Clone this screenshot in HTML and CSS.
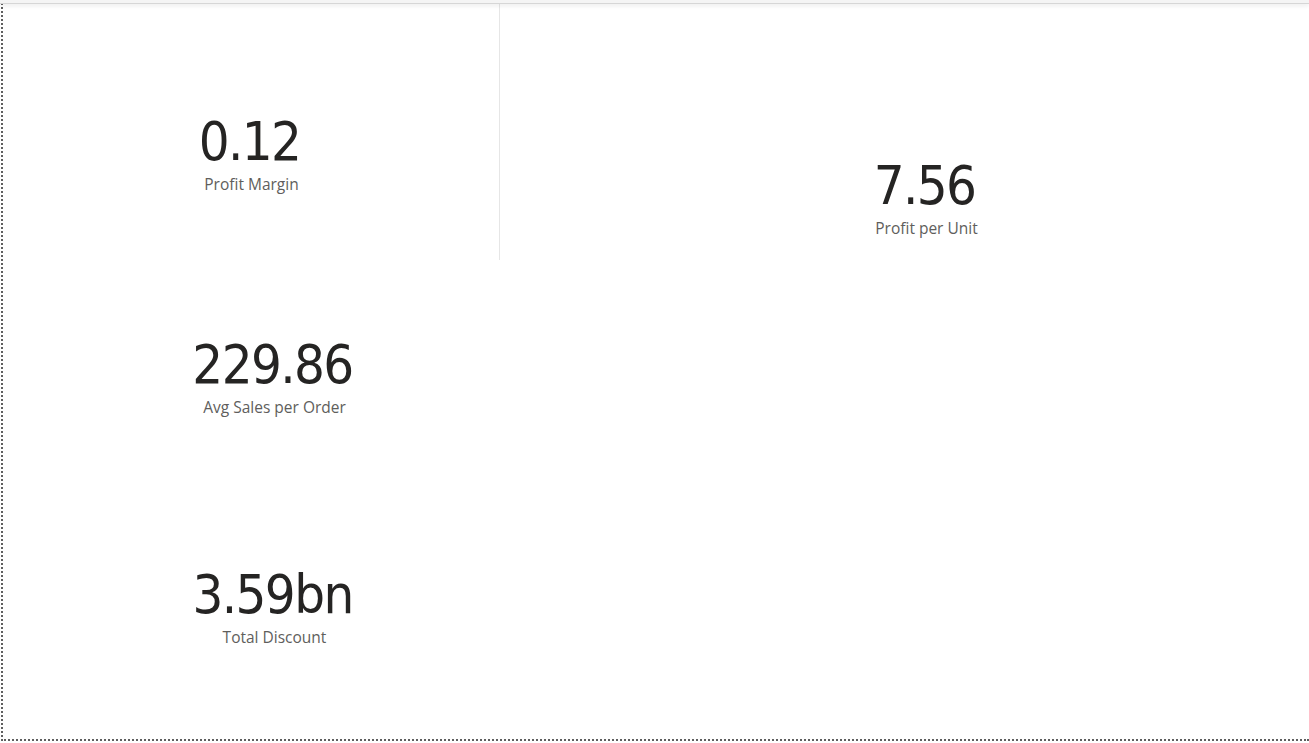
FILE: index.html
```html
<!DOCTYPE html>
<html lang="en">
<head>
<meta charset="utf-8">
<title>Report</title>
<link rel="stylesheet" href="styles.css">
</head>
<body>
<div class="topbar"></div>
<main class="canvas">
  <section class="visual card-margin">
    <div class="value">0.12</div>
    <div class="label">Profit Margin</div>
  </section>
  <section class="visual card-unit">
    <div class="value">7.56</div>
    <div class="label">Profit per Unit</div>
  </section>
  <section class="visual card-avg">
    <div class="value">229.86</div>
    <div class="label">Avg Sales per Order</div>
  </section>
  <section class="visual card-discount">
    <div class="value">3.59bn</div>
    <div class="label">Total Discount</div>
  </section>
</main>
</body>
</html>
```
FILE: styles.css
```css
html, body {
  margin: 0;
  padding: 0;
  width: 1309px;
  height: 743px;
  overflow: hidden;
  background: #ffffff;
}

.topbar {
  position: absolute;
  left: 0;
  top: 0;
  width: 1309px;
  height: 3px;
  background: #f4f4f4;
  border-bottom: 1px solid #d6d6d6;
  box-shadow: 0 2px 4px rgba(0, 0, 0, 0.08);
  z-index: 2;
}

.canvas {
  position: absolute;
  left: 1px;
  top: 0;
  width: 1308px;
  height: 741px;
  box-sizing: border-box;
  overflow: hidden;
  border-left: 2px dotted #5f5f5f;
  border-bottom: 2px dotted #5f5f5f;
}

.visual {
  position: absolute;
  display: flex;
  flex-direction: column;
  align-items: center;
  box-sizing: border-box;
}

.value {
  font-family: "DejaVu Sans Condensed", "DejaVu Sans", sans-serif;
  font-size: 54px;
  line-height: 54px;
  color: #252423;
  letter-spacing: -1.6px;
  margin-left: -4px;
}

.label {
  font-family: "Segoe UI", "Open Sans", sans-serif;
  font-size: 15.5px;
  line-height: 20px;
  color: #605e5c;
  margin-top: 5px;
}

.card-margin {
  left: 1px;
  top: 3px;
  width: 496px;
  height: 257px;
  padding-top: 112px;
  border-right: 1px solid #e6e6e6;
}

.card-unit {
  left: 498px;
  top: 3px;
  width: 851px;
  height: 257px;
  padding-top: 156px;
}

.card-avg {
  left: 1px;
  top: 260px;
  width: 541px;
  height: 200px;
  padding-top: 78px;
}

.card-discount {
  left: 1px;
  top: 490px;
  width: 541px;
  height: 200px;
  padding-top: 78px;
}
```
